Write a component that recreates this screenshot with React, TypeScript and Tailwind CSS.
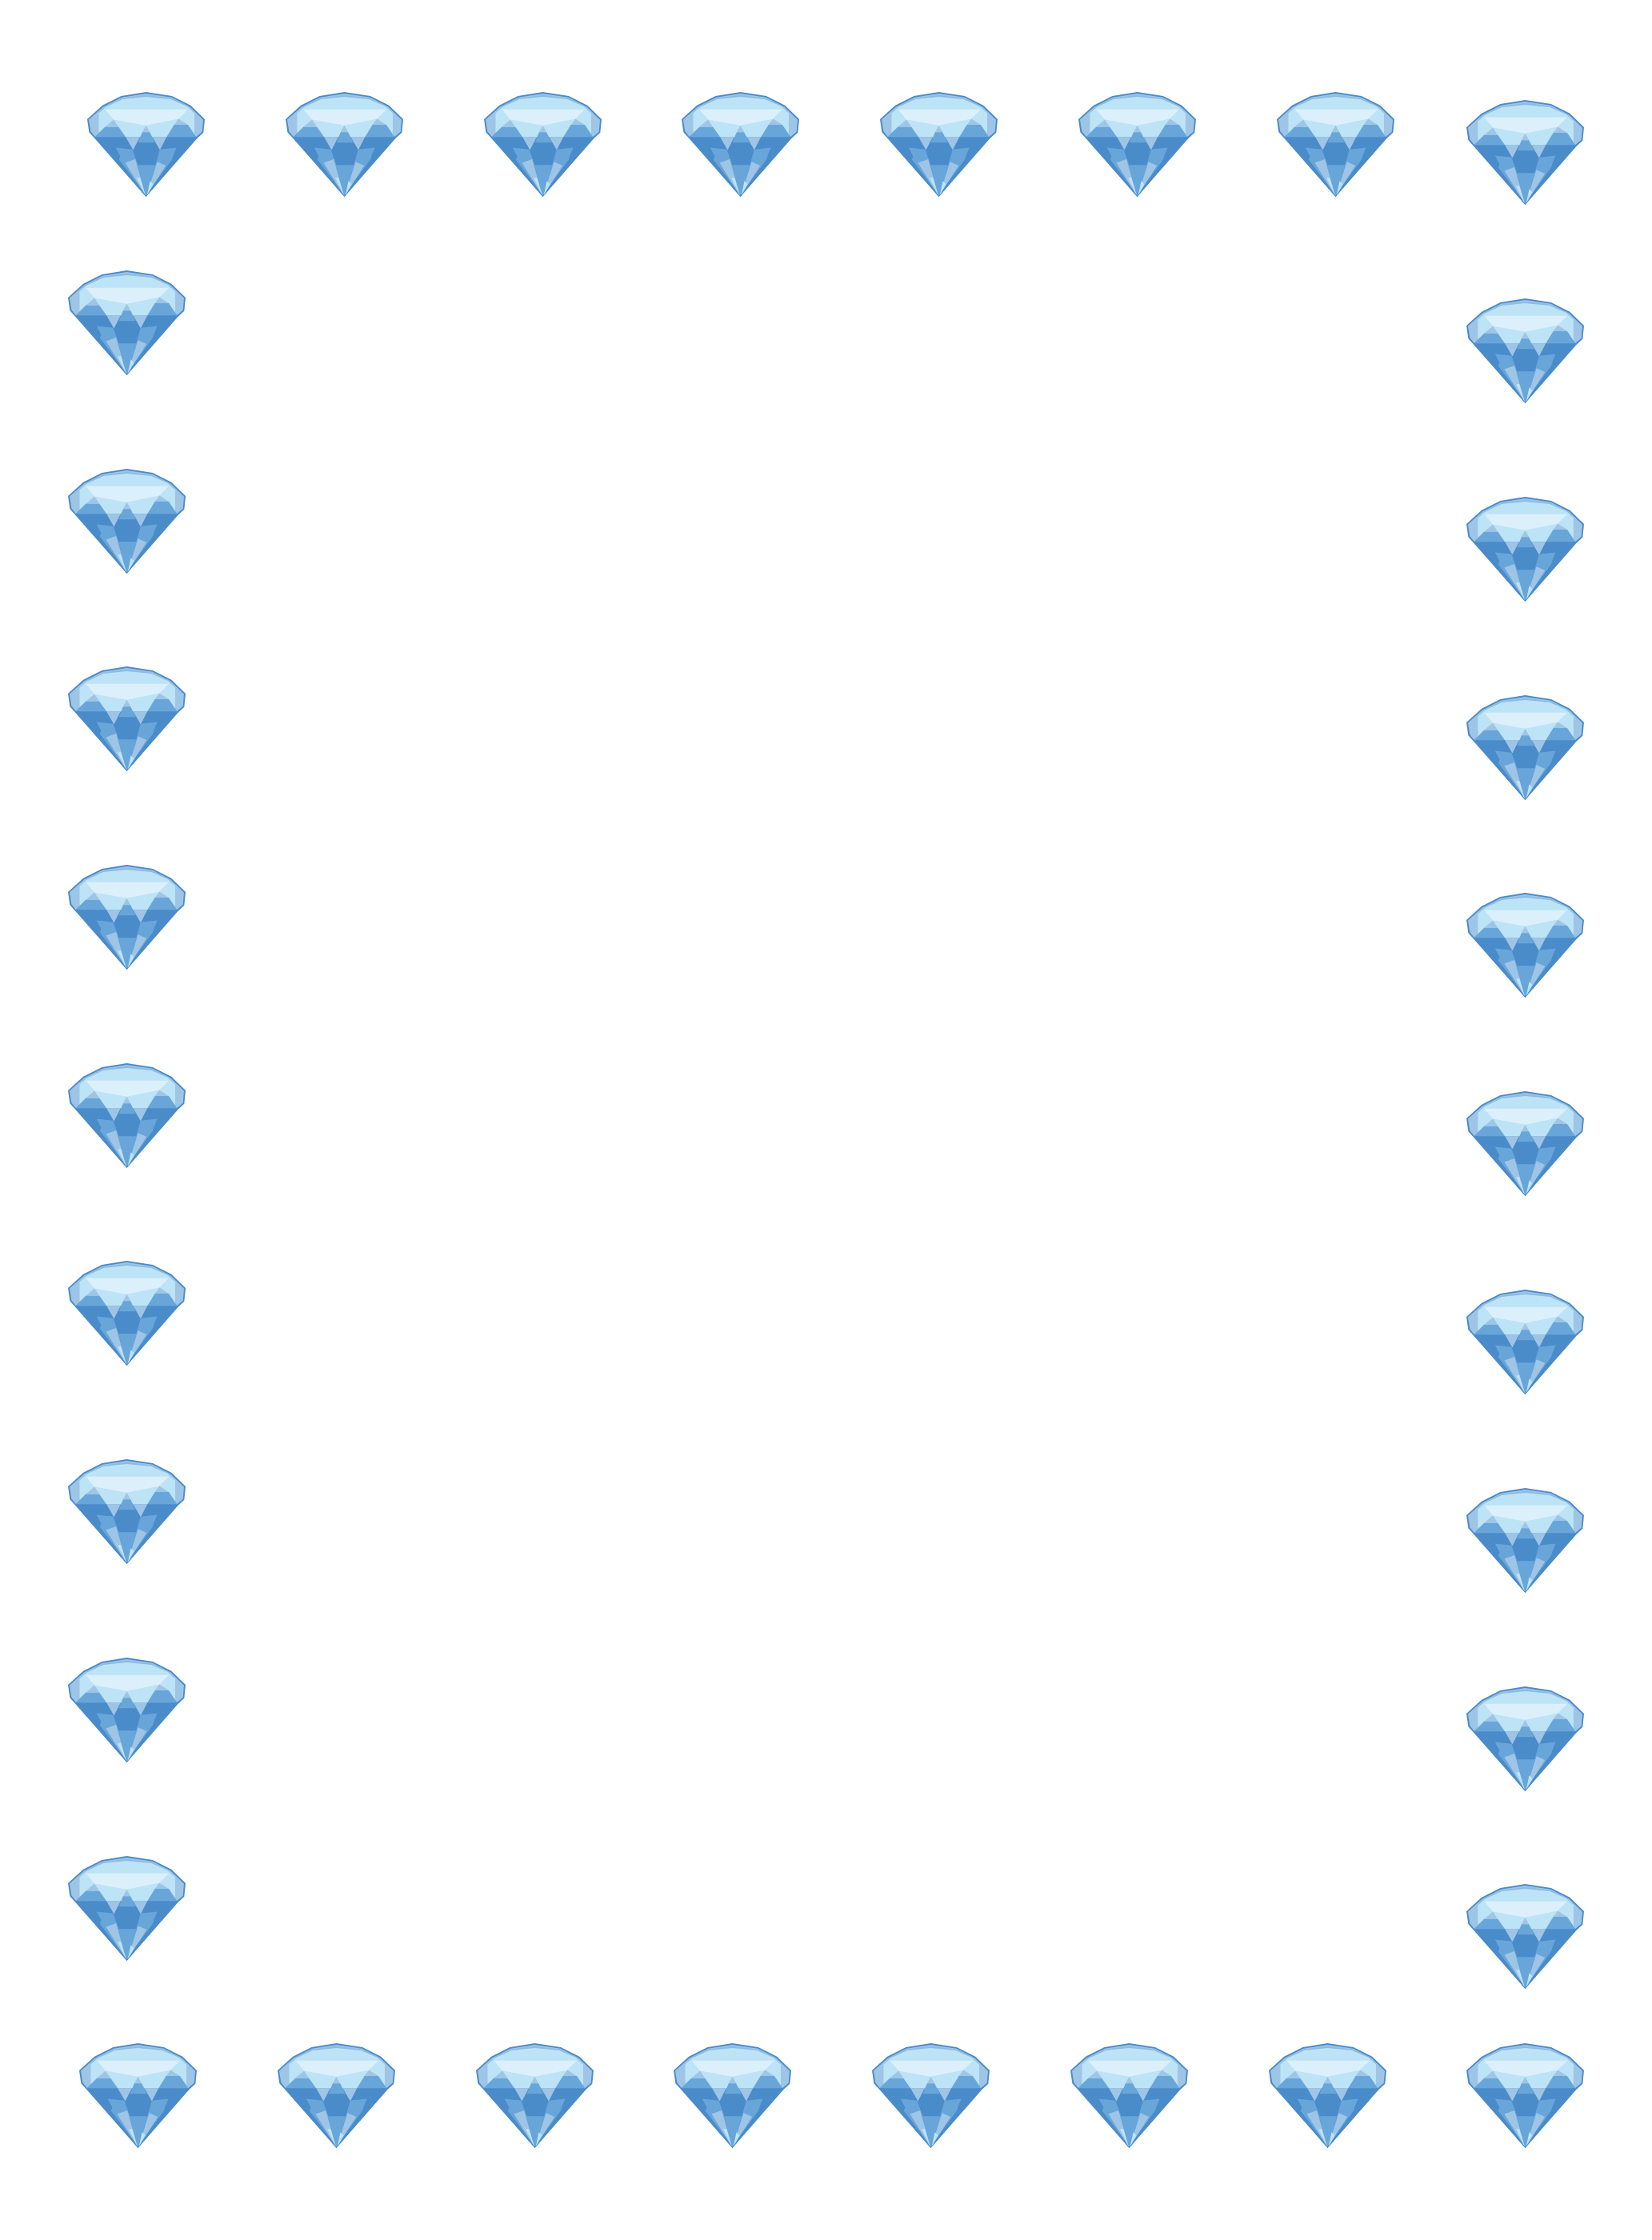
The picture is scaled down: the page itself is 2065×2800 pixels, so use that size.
const FACETS: [string, string][] = [
  ["#4a8bca", "28,147 85,95 155,60 248,45 345,60 415,95 468,147 463,197 440,218 248,437 52,214 35,195"],
  ["#9fc5e6", "34,148 88,100 157,65 248,51 344,65 412,100 462,149 458,194 435,213 58,213 41,192"],
  ["#8bbae3", "71,124 95,99 158,68 248,57 342,68 404,96 429,124 429,213 71,213"],
  ["#bde3f6", "71,124 97,101 160,72 248,63 340,72 402,99 429,124 429,213 71,213"],
  ["#dcf0fb", "95,110 405,110 370,145 248,170 127,148"],
  ["#68a6da", "56,213 95,175 145,175 172,213"],
  ["#68a6da", "436,213 405,168 353,168 325,213"],
  ["#9fc5e6", "95,175 127,148 145,175"],
  ["#9fc5e6", "405,168 370,145 353,168"],
  ["#4a8bca", "56,213 172,213 200,262 300,262 325,213 436,213 248,437"],
  ["#9fc5e6", "172,213 225,213 200,262"],
  ["#9fc5e6", "325,213 272,213 300,262"],
  ["#9fc5e6", "248,170 262,195 234,195"],
  ["#68a6da", "234,195 262,195 282,235 218,235"],
  ["#4a8bca", "218,235 282,235 298,265 283,318 218,318 202,265"],
  ["#68a6da", "135,253 197,260 218,318 248,430 147,298 152,285"],
  ["#68a6da", "362,253 300,260 283,318 248,430 345,298 350,282"],
  ["#68a6da", "218,318 283,318 252,428 248,432 245,428"],
  ["#9fc5e6", "170,310 208,296 245,428 246,432"],
  ["#9fc5e6", "322,320 290,306 252,428 250,432"],
  ["#bde3f6", "214,367 226,365 245,428 246,432"],
  ["#bde3f6", "263,378 275,390 252,430"],
];

function Diamond() {
  return (
    <svg viewBox="28 45 440 392" className="block h-[131px] w-[147px] shrink-0" aria-label="💎" role="img">
      {FACETS.map(([fill, points], i) => (
        <polygon key={i} fill={fill} points={points} />
      ))}
    </svg>
  );
}

const seven = [0, 1, 2, 3, 4, 5, 6];
const nine = [0, 1, 2, 3, 4, 5, 6, 7, 8];

export default function App() {
  return (
    <div className="h-[2800px] w-[2065px] overflow-hidden bg-white">
      <div className="flex items-start pl-[109px] pr-[85px] pt-[115px]">
        <div className="flex gap-[100.8px]">
          {seven.map((i) => (
            <Diamond key={i} />
          ))}
        </div>
        <div className="ml-auto mt-[10px]">
          <Diamond />
        </div>
      </div>
      <div className="flex items-start justify-between px-[85px]">
        <div className="flex flex-col gap-[116.7px] pt-[82px]">
          {nine.map((i) => (
            <Diamond key={i} />
          ))}
        </div>
        <div className="flex flex-col gap-[116.8px] pt-[117px]">
          {nine.map((i) => (
            <Diamond key={i} />
          ))}
        </div>
      </div>
      <div className="mt-[68px] flex items-start pl-[99px] pr-[85px]">
        <div className="flex gap-[100.8px]">
          {seven.map((i) => (
            <Diamond key={i} />
          ))}
        </div>
        <div className="ml-auto">
          <Diamond />
        </div>
      </div>
    </div>
  );
}
